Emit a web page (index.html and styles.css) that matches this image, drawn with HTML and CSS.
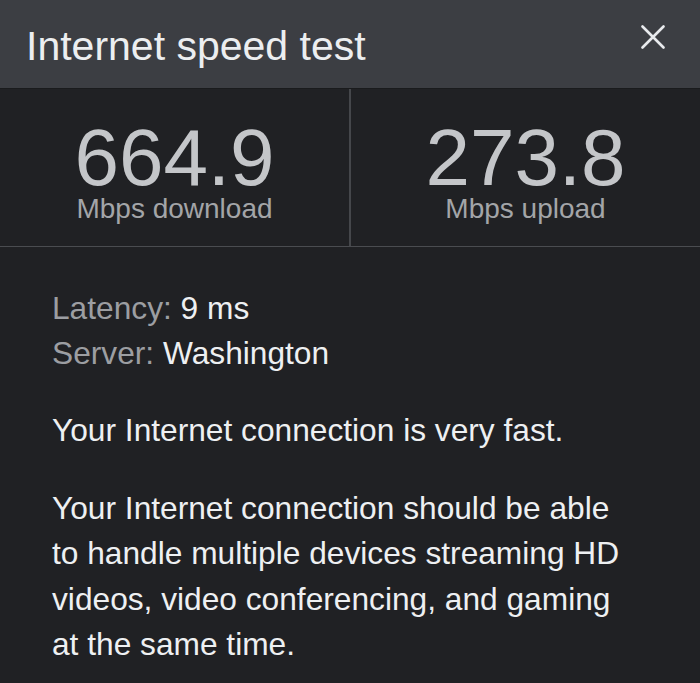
FILE: index.html
```html
<!DOCTYPE html>
<html lang="en">
<head>
<meta charset="utf-8">
<title>Internet speed test</title>
<link rel="stylesheet" href="styles.css">
</head>
<body>
<div class="panel">
  <header class="header">
    <h1 class="title">Internet speed test</h1>
    <svg class="close" width="24" height="24" viewBox="0 0 24 24" aria-label="Close">
      <path d="M1.5 1.5 L22.5 22.5 M22.5 1.5 L1.5 22.5" stroke="#e8eaed" stroke-width="2.6" stroke-linecap="round" fill="none"/>
    </svg>
  </header>
  <section class="stats">
    <div class="stat">
      <div class="stat-value">664.9</div>
      <div class="stat-label">Mbps download</div>
    </div>
    <div class="stat stat-right">
      <div class="stat-value">273.8</div>
      <div class="stat-label">Mbps upload</div>
    </div>
  </section>
  <section class="details">
    <div class="info">
      <div class="info-row"><span class="info-key">Latency:</span> 9 ms</div>
      <div class="info-row"><span class="info-key">Server:</span> Washington</div>
    </div>
    <p class="text">Your Internet connection is very fast.</p>
    <p class="text">Your Internet connection should be able to handle multiple devices streaming HD videos, video conferencing, and gaming at the same time.</p>
  </section>
</div>
</body>
</html>
```
FILE: styles.css
```css
* { box-sizing: border-box; }
html, body {
  margin: 0;
  padding: 0;
  background: #202124;
}
body {
  font-family: "Liberation Sans", Arial, sans-serif;
  color: #e8eaed;
  width: 700px;
  height: 683px;
  overflow: hidden;
}
.header {
  display: flex;
  justify-content: space-between;
  align-items: flex-start;
  height: 88px;
  background: #3c3e43;
  padding: 6px 35px 0 26px;
}
.title {
  margin: 0;
  font-weight: normal;
  font-size: 41px;
  line-height: 80px;
  color: #eceef0;
}
.close {
  margin-top: 19px;
  display: block;
}
.stats {
  display: grid;
  grid-template-columns: 349px 1fr;
  border-top: 1px solid #1a1b1d;
  border-bottom: 1px solid #4a4c50;
  height: 159px;
}
.stat {
  display: flex;
  flex-direction: column;
  align-items: center;
  padding-top: 32px;
}
.stat-right {
  border-left: 2px solid #45474b;
}
.stat-value {
  font-size: 80px;
  line-height: 74px;
  color: #c4c6c9;
}
.stat-label {
  font-size: 28px;
  line-height: 28px;
  color: #a3a5a8;
}
.details {
  padding: 39px 60px 0 52px;
}
.info-row {
  font-size: 31.7px;
  line-height: 45px;
  color: #eef0f2;
}
.info-key {
  color: #9c9ea2;
}
.text {
  margin: 32px 0 0 0;
  font-size: 31.7px;
  line-height: 45.5px;
  color: #eef0f2;
}
```
